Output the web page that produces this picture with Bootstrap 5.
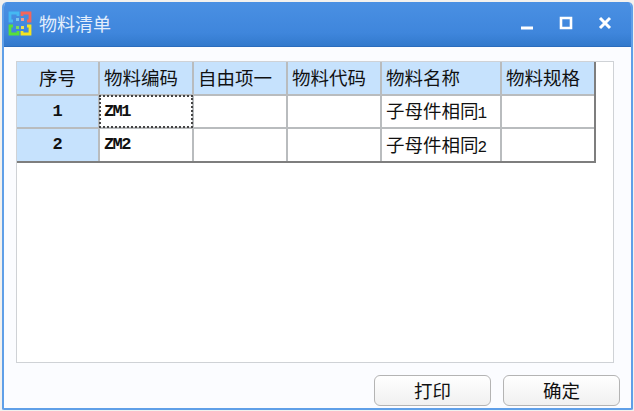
<!DOCTYPE html>
<html lang="zh-CN">
  <head>
    <meta charset="UTF-8" />
    <meta name="viewport" content="width=device-width, initial-scale=1.0" />
    <title>物料清单</title>
    <link
      href="https://cdn.jsdelivr.net/npm/bootstrap@5.3.0/dist/css/bootstrap.min.css"
      rel="stylesheet"
    />
    <style>
      html, body {
        height: 100%;
      }

      body {
        background-color: #f3f1ee;
        font-family: "Noto Sans CJK SC", "Liberation Sans", sans-serif;
        padding: 2px 1px 1px 2px;
        overflow: hidden;
      }

      .app-window {
        height: 408px;
        background-color: #fbfcff;
        border: 2px solid #5f9fe8;
        border-top: 0;
        border-radius: 5px 5px 2px 2px;
        overflow: hidden;
      }

      .title-bar {
        height: 45px;
        margin: 0 -2px;
        padding: 0 21px 2px 6px;
        background: linear-gradient(#4a90e3, #3f86dc 70%, #3279cc);
        border-bottom: 1px solid #2a6cbd;
        color: #e3eefc;
        font-size: 18px;
      }

      .title-text {
        margin-left: 7px;
      }

      .win-controls {
        gap: 25px;
      }

      .panel-box {
        height: 302px;
        margin: 14px 17px 0 12px;
        background-color: #fff;
        border: 1px solid #cfd2d6;
      }

      .sheet-wrap {
        width: 579px;
        border-right: 2px solid #7e7e7e;
        border-bottom: 2px solid #7e7e7e;
      }

      .sheet {
        table-layout: fixed;
        width: 100%;
        margin: 0;
        font-size: 18.5px;
        color: #111;
      }

      .sheet th, .sheet td {
        height: 33px;
        padding: 0 0 0 4px;
        font-weight: 400;
        vertical-align: middle;
        border: 1px solid #b9bcbe;
        border-width: 0 2px 2px 0;
        white-space: nowrap;
        overflow: hidden;
      }

      .sheet th:last-child, .sheet td:last-child {
        border-right: 0;
      }

      .sheet tbody tr:last-child td {
        border-bottom: 0;
      }

      .sheet thead th, .sheet .row-no {
        background-color: #c6e2fd;
      }

      .sheet .row-no, .sheet .col-no {
        padding: 0;
        text-align: center;
      }

      .sheet .row-no {
        font-family: "Liberation Mono", monospace;
        font-size: 17px;
        font-weight: 700;
      }

      .sheet .code-cell {
        font-family: "Liberation Mono", monospace;
        font-size: 17px;
        font-weight: 700;
        letter-spacing: -1.6px;
      }

      .sheet .code-cell.is-focus {
        outline: 2px dotted #444;
        outline-offset: -2px;
      }

      .sheet .digit {
        font-family: "Liberation Mono", monospace;
        font-size: 16px;
        margin-left: -1px;
      }

      .bottom-bar {
        gap: 12px;
        margin: 12px 11px 0 0;
      }

      .win-btn {
        width: 117px;
        height: 31px;
        padding: 0;
        font-size: 18.5px;
        line-height: 29px;
        color: #111;
        background: linear-gradient(#fff, #f0f0f0);
        border: 1px solid #b4b4b4;
        border-radius: 6px;
      }
    </style>
  </head>
  <body>
    <div class="app-window d-flex flex-column">
      <!-- Title bar -->
      <div class="title-bar d-flex align-items-center">
        <svg width="24" height="25" viewBox="0 0 24 25" fill="none" stroke-width="2.8">
          <path d="M10 5V2H2v8h3" stroke="#45b8f2" />
          <path d="M14 5V2h8v8h-3" stroke="#f2665c" />
          <path d="M10 20v3H2v-8h3" stroke="#58e03a" />
          <path d="M14 20v3h8v-8h-3" stroke="#f5e520" />
          <path d="M8 7h3v3H8z" fill="#7cc4ec" stroke="none" />
          <path d="M13 7h3v3h-3z" fill="#ee9b92" stroke="none" />
          <path d="M8 15h3v3H8z" fill="#7fdc5c" stroke="none" />
          <path d="M13 15h3v3h-3z" fill="#eee04e" stroke="none" />
        </svg>
        <span class="title-text">物料清单</span>
        <div class="win-controls d-flex align-items-center ms-auto">
          <svg width="14" height="14" viewBox="0 0 14 14"><path d="M1 12h12" stroke="#fff" stroke-width="3" /></svg>
          <svg width="14" height="14" viewBox="0 0 14 14" fill="none"><path d="M2 2h10v10H2z" stroke="#fff" stroke-width="2.6" /></svg>
          <svg width="14" height="14" viewBox="0 0 14 14"><path d="M2 2l10 10M12 2L2 12" stroke="#fff" stroke-width="3" /></svg>
        </div>
      </div>

      <!-- Grid panel -->
      <div class="panel-box">
        <div class="sheet-wrap">
          <table class="sheet">
            <colgroup>
              <col style="width: 82px" />
              <col style="width: 94px" />
              <col style="width: 94px" />
              <col style="width: 94px" />
              <col style="width: 120px" />
              <col />
            </colgroup>
            <thead>
              <tr>
                <th class="col-no">序号</th>
                <th>物料编码</th>
                <th>自由项一</th>
                <th>物料代码</th>
                <th>物料名称</th>
                <th>物料规格</th>
              </tr>
            </thead>
            <tbody>
              <tr>
                <td class="row-no">1</td>
                <td class="code-cell is-focus">ZM1</td>
                <td></td>
                <td></td>
                <td>子母件相同<span class="digit">1</span></td>
                <td></td>
              </tr>
              <tr>
                <td class="row-no">2</td>
                <td class="code-cell">ZM2</td>
                <td></td>
                <td></td>
                <td>子母件相同<span class="digit">2</span></td>
                <td></td>
              </tr>
            </tbody>
          </table>
        </div>
      </div>

      <!-- Buttons -->
      <div class="bottom-bar d-flex justify-content-end">
        <button type="button" class="btn win-btn">打印</button>
        <button type="button" class="btn win-btn">确定</button>
      </div>
    </div>
    <script src="https://cdn.jsdelivr.net/npm/bootstrap@5.3.0/dist/js/bootstrap.bundle.min.js"></script>
  </body>
</html>
